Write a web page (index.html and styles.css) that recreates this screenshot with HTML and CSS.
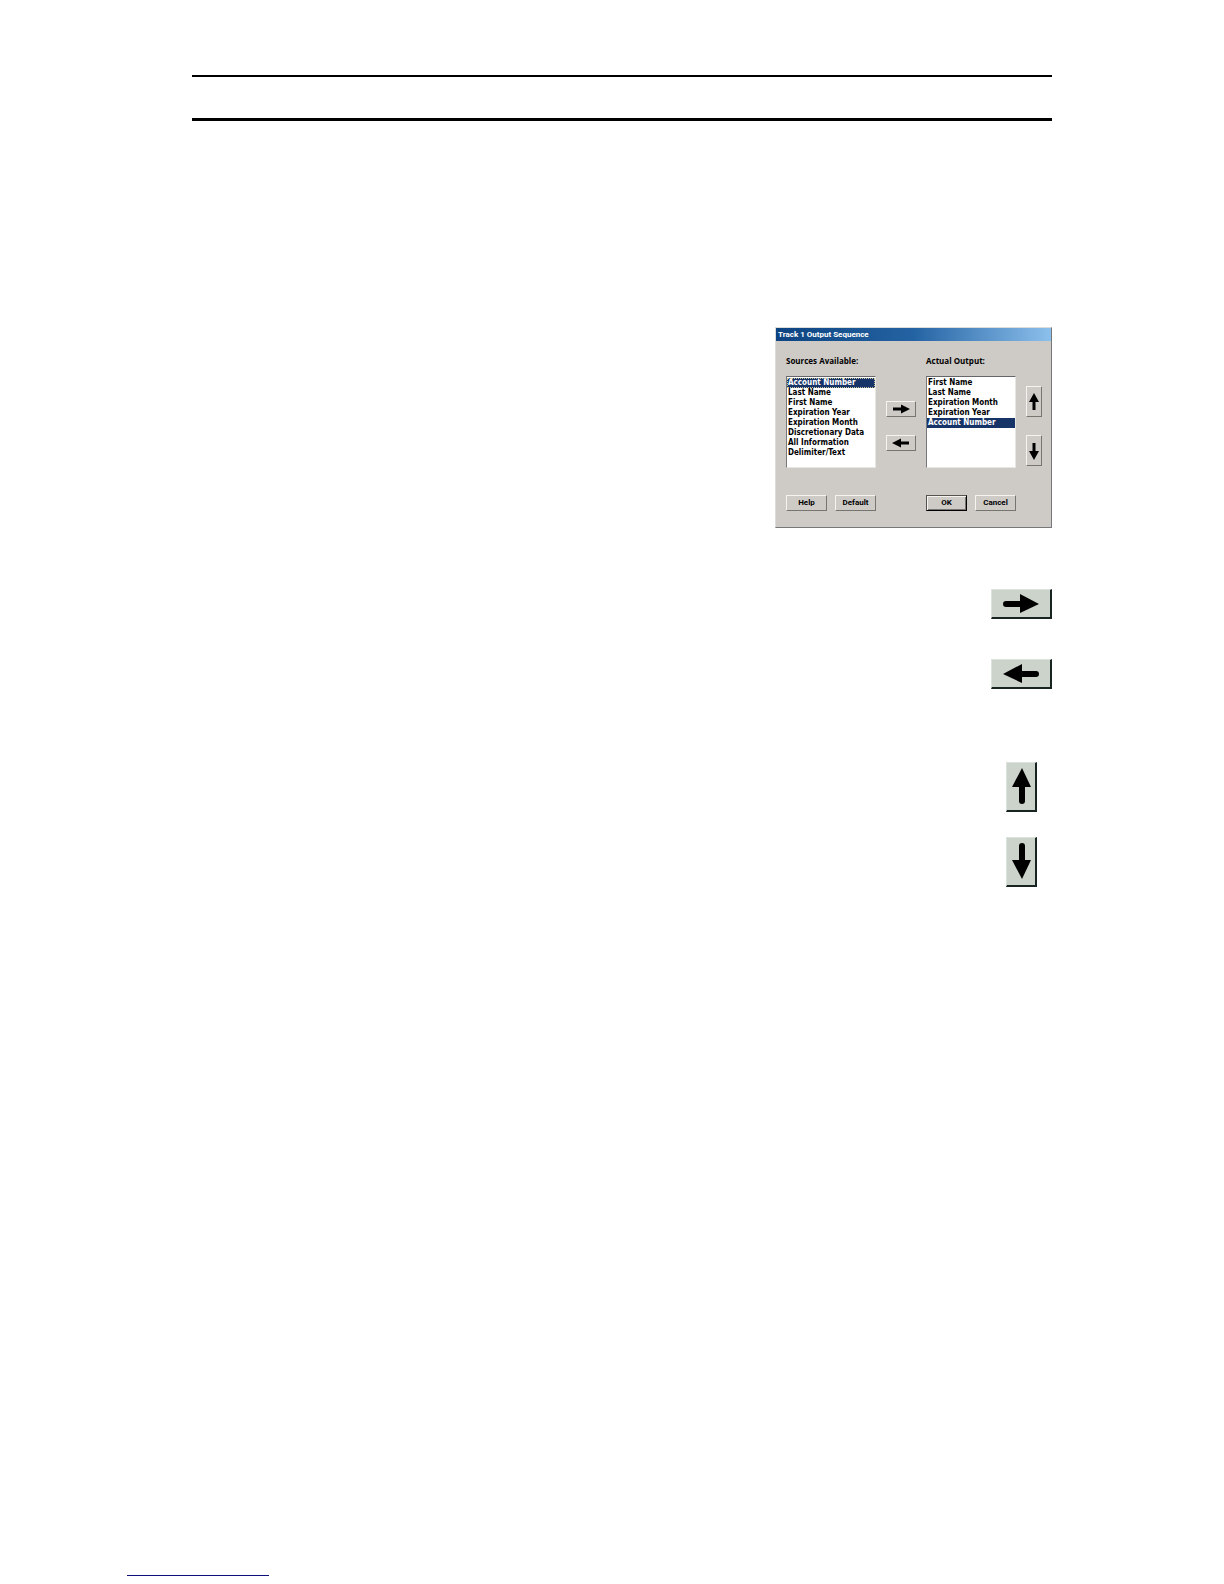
FILE: index.html
```html
<!DOCTYPE html>
<html lang="en">
<head>
    <meta charset="UTF-8">
    <meta name="viewport" content="width=device-width, initial-scale=1.0">
    <title>Track 1 Output Sequence</title>
    <link rel="stylesheet" href="styles.css">
</head>
<body>
    <header class="page-header"></header>

    <main class="content">
        <section class="dialog" role="dialog" aria-labelledby="dialogTitle">
            <h1 class="dialog-title" id="dialogTitle">Track 1 Output Sequence</h1>
            <div class="dialog-body">
                <div class="list-column">
                    <label for="sources">Sources Available:</label>
                    <select class="list" id="sources" size="8" multiple>
                        <option class="focused" selected>Account Number</option>
                        <option>Last Name</option>
                        <option>First Name</option>
                        <option>Expiration Year</option>
                        <option>Expiration Month</option>
                        <option>Discretionary Data</option>
                        <option>All Information</option>
                        <option>Delimiter/Text</option>
                    </select>
                    <div class="actions">
                        <button type="button">Help</button>
                        <button type="button">Default</button>
                    </div>
                </div>

                <div class="move-column">
                    <button type="button" aria-label="Add">
                        <svg width="18" height="10" viewBox="0 0 18 10"><path d="M1 3.5h8V0.5l9 4.5-9 4.5V6.5H1z"/></svg>
                    </button>
                    <button type="button" aria-label="Remove">
                        <svg width="18" height="10" viewBox="0 0 18 10"><path d="M17 3.5H9V0.5L0 5l9 4.5V6.5h8z"/></svg>
                    </button>
                </div>

                <div class="list-column">
                    <label for="output">Actual Output:</label>
                    <select class="list" id="output" size="8" multiple>
                        <option>First Name</option>
                        <option>Last Name</option>
                        <option>Expiration Month</option>
                        <option>Expiration Year</option>
                        <option selected>Account Number</option>
                    </select>
                    <div class="actions">
                        <button type="button" class="default">OK</button>
                        <button type="button">Cancel</button>
                    </div>
                </div>

                <div class="order-column">
                    <button type="button" aria-label="Move up">
                        <svg width="10" height="18" viewBox="0 0 10 18"><path d="M3.5 17V9H0L5 0l5 9H6.5v8z"/></svg>
                    </button>
                    <button type="button" aria-label="Move down">
                        <svg width="10" height="18" viewBox="0 0 10 18"><path d="M3.5 1v8H0l5 9 5-9H6.5V1z"/></svg>
                    </button>
                </div>
            </div>
        </section>

        <div class="keys">
            <button type="button" class="key wide" aria-label="Right arrow">
                <svg width="36" height="20" viewBox="0 0 36 20"><path d="M3 7h14V0l19 10-19 9V13H3a3 3 0 0 1 0-6z"/></svg>
            </button>
            <button type="button" class="key wide" aria-label="Left arrow">
                <svg width="36" height="20" viewBox="0 0 36 20"><path d="M33 7H19V0L0 10l19 9V13h14a3 3 0 0 0 0-6z"/></svg>
            </button>
        </div>

        <div class="keys vertical">
            <button type="button" class="key tall" aria-label="Up arrow">
                <svg width="20" height="36" viewBox="0 0 20 36"><path d="M8 33V19H1L11 0l9 19H14v14a3 3 0 0 1-6 0z"/></svg>
            </button>
            <button type="button" class="key tall" aria-label="Down arrow">
                <svg width="20" height="36" viewBox="0 0 20 36"><path d="M8 3v14H1l10 19 9-19H14V3a3 3 0 0 0-6 0z"/></svg>
            </button>
        </div>
    </main>

    <footer class="page-footer">
        <a class="footer-link" href="#" aria-label="Website"></a>
    </footer>
</body>
</html>
```
FILE: styles.css
```css
* {
    box-sizing: border-box;
}
body {
    margin: 0;
    min-height: 100vh;
    display: flex;
    flex-direction: column;
    background: #fff;
    color: #000;
    font: bold 8px/10px Roboto, "Open Sans", sans-serif;
}
button {
    display: flex;
    align-items: center;
    justify-content: center;
    margin: 0;
    padding: 0;
    font: inherit;
    color: #000;
    background: #cecbc7;
    border: 1px solid;
    border-color: #f4f3f0 #77756f #77756f #f4f3f0;
}
svg {
    display: block;
    flex: none;
}
.page-header {
    height: 46px;
    margin: 75px 172px 0 192px;
    border-top: 2px solid #000;
    border-bottom: 3px solid #000;
}
.content {
    display: flex;
    flex-direction: column;
    align-items: flex-end;
    margin: 206px 172px 0 192px;
}

/* dialog */
.dialog {
    background: #cecbc7;
    border: 1px solid;
    border-color: #dedcd8 #77777b #77777b #dedcd8;
}
.dialog-title {
    margin: 0;
    padding: 0 2px;
    font: inherit;
    line-height: 13px;
    color: #fff;
    background: linear-gradient(to right, #0d4380, #2463a3 50%, #8cc0ec);
}
.dialog-body {
    display: flex;
    gap: 10px;
    padding: 13px 9px 16px 10px;
}
.list-column {
    width: 90px;
}
.list-column label {
    display: block;
    font-family: "Open Sans", sans-serif;
    line-height: 14px;
    white-space: nowrap;
}
.list {
    display: block;
    width: 100%;
    height: 92px;
    margin: 8px 0 27px;
    padding: 1px 0 0;
    overflow: hidden;
    font: bold 8px/10px "DejaVu Sans Condensed", "Open Sans", sans-serif;
    color: #000;
    background: #fff;
    border: 1px solid;
    border-color: #66666a #e8e6e2 #e8e6e2 #77777b;
    border-radius: 0;
    outline: none;
}
.list option {
    min-height: 10px;
    padding: 0 1px;
    font-weight: bold;
    line-height: 10px;
}
.list option:checked {
    color: #fff;
    background: #173468 linear-gradient(#173468, #173468);
}
.list .focused {
    outline: 1px dotted #c8c49c;
    outline-offset: -1px;
}
.actions {
    display: flex;
    gap: 8px;
}
.actions button {
    width: 41px;
    height: 16px;
}
.actions .default {
    border-color: #55534f #000 #000 #55534f;
    box-shadow: inset 1px 1px #f4f3f0, inset -1px -1px #77756f;
}
.move-column,
.order-column {
    display: flex;
    flex-direction: column;
    gap: 18px;
}
.move-column {
    padding-top: 47px;
}
.move-column button {
    width: 30px;
    height: 16px;
}
.order-column {
    padding-top: 32px;
}
.order-column button {
    width: 16px;
    height: 31px;
}

/* enlarged arrow keys */
.keys {
    display: flex;
    flex-direction: column;
    gap: 40px;
    margin-top: 61px;
}
.keys.vertical {
    gap: 25px;
    margin-top: 73px;
    margin-right: 15px;
}
.key {
    background: #cbd3cb;
    border-width: 1px 2px 2px 1px;
    border-color: #dce2dc #182422 #182422 #dce2dc;
}
.wide {
    width: 61px;
    height: 30px;
}
.tall {
    width: 31px;
    height: 50px;
    padding-bottom: 2px;
}

.page-footer {
    display: flex;
    margin-top: auto;
    padding: 0 0 8px 127px;
}
.footer-link {
    width: 142px;
    border-bottom: 1px solid #10107c;
}
```
